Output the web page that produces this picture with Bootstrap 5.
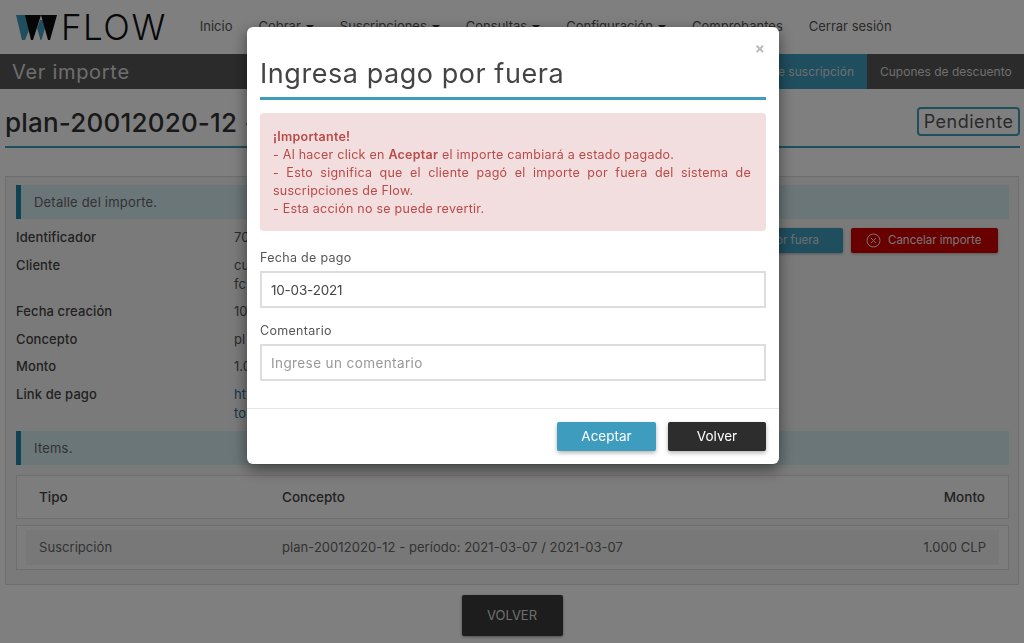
<!DOCTYPE html>
<html lang="es"><head><meta charset="utf-8"><title>Ver importe</title>
<link href="https://cdn.jsdelivr.net/npm/bootstrap@5.3.0/dist/css/bootstrap.min.css" rel="stylesheet">
<style>
html,body{height:643px;overflow:hidden}
body{font-family:Inter,"Open Sans","Liberation Sans",sans-serif;font-size:13px;color:#555;background:#fff}
.topnav{height:54px;padding:0 16px;background:#fff}
.logo-txt{font-size:35px;font-weight:300;color:#111;line-height:1;letter-spacing:1.5px;margin-left:2px}
.navlinks{margin-left:33px;gap:26px}
.navlinks a{color:#555;font-size:13px;text-decoration:none}
.navlinks a.drop::after{content:"";display:inline-block;border:4px solid transparent;border-top-color:#333;border-bottom:0;margin-left:5px;vertical-align:2px}
.subbar{height:35px;background:#575757;color:#ddd}
.subbar h2{font-size:20px;font-weight:400;margin:0 0 0 12px;letter-spacing:.7px}
.subtab{height:35px;display:flex;align-items:center;padding:0 13px;font-size:12px;color:#ddd;white-space:nowrap}
.subtab-on{background:#3e9dbf;padding-left:70px}
.subtab-off{width:157px;background:#575757;padding-right:0}
.pagehead{margin:18px 4px 0 5px;height:41px;border-bottom:2px solid #3e9dbf;padding-bottom:9px}
.pagehead h1{font-size:26px;font-weight:500;color:#333;margin:0;letter-spacing:.2px}
.estado{border:2px solid #3e9dbf;border-radius:4px;font-size:18px;line-height:25px;padding:0;color:#555;width:103px;text-align:center;letter-spacing:.5px}
.panelbox{margin:28px 5px 0;height:409px;border:1px solid #ddd;background:#f5f5f5;padding:8px 9px 0 10px}
.sechead{height:34px;background:#d6ecf2;border-left:5px solid #1f87a8;padding-left:13px;line-height:34px;color:#666;letter-spacing:.2px}
.infoarea{height:212px}
.dlab{width:218px;font-weight:500;color:#444;flex:none;letter-spacing:.1px}
.infocol{padding-top:9px}
.drow{line-height:19px;margin-bottom:8.5px}
.dval{width:300px;color:#555}
.dval a{color:#1f6d9b;text-decoration:none}
.actions{margin-top:9px;gap:8px;margin-right:11px}
.act{height:25px;border-radius:2px;font-size:11.5px;color:#ddd;display:flex;align-items:center;box-shadow:0 1px 3px rgba(0,0,0,.3)}
.act-blue{background:#3e9dbf;width:200px;justify-content:flex-end;padding-right:24px}
.act-red{background:#d00000;width:147px;padding-left:15px;gap:7px;color:#eee}
.tcard{background:#fafafa;border:1px solid #ddd;padding:0 23px 0 22px;margin-top:10px;height:44px}
.tcard-b{margin-top:6px;height:45px;padding:4px 9px;color:#666;letter-spacing:.05px}
.tcard-b>div{background:#f0f0f0;height:35px;padding:0 13px}
.tcol1{width:243px;flex:none}
.tcard-h{font-weight:500;font-size:13.5px;color:#444}
.backbtn{margin-top:10px;height:41px;width:101px;background:#3a3a3a;color:#ddd;font-size:13px;border-radius:2px;box-shadow:0 1px 3px rgba(0,0,0,.4)}
.dlg{width:532px;height:437px;margin:27px 0 0 247px;background:#fff;border-radius:6px;box-shadow:0 5px 15px rgba(0,0,0,.5);padding:0 13px;position:relative}
.dlg .xclose{position:absolute;top:13px;right:14px;font-size:15px;line-height:18px;color:#bbb;font-weight:700}
.dlg h3{margin:0;padding-top:29px;height:73px;border-bottom:3px solid #3e9dbf;font-size:27px;font-weight:400;color:#444;letter-spacing:.55px;line-height:35px}
.warn{margin:13px 0 0;background:#f2dede;color:#b94a48;border-radius:4px;padding:15px 15px 0 13px;height:118px;font-size:12.5px;line-height:18px;text-align:justify;letter-spacing:.25px}
.warn b{font-weight:600}
.fldlab{font-size:12.5px;line-height:18px;color:#555;margin:18px 0 4px;letter-spacing:.3px}
.fld{height:37px;border:2px solid #ddd;border-radius:0;font-size:13.5px;padding:0 9px;color:#444;box-shadow:none}
.fld-date{letter-spacing:-.2px}
.fld::placeholder{color:#999;letter-spacing:.4px}
.fld2{margin-top:14px}
.dfoot{margin:27px -13px 0;border-top:1px solid #e5e5e5;padding:13px 13px 0;gap:12px}
.mbtn{height:29px;width:99px;border:0;border-radius:2px;color:#fff;font-size:13.5px;box-shadow:0 2px 4px rgba(0,0,0,.3);padding:0}
.mbtn-a{background:#3e9dbf}
.mbtn-v{background:#2d2d2d;width:98px}
.modal-backdrop{opacity:.5}
</style></head><body>
<nav class="topnav d-flex align-items-center">
 <svg width="43" height="27" viewBox="0 0 43 27" aria-hidden="true"><polygon points="0,1 10,1 13,16 9,26 6,26" fill="#3e9dbf"/><polygon points="21,14 24,6 27,6 29,14 25.5,26 24.5,26" fill="#3e9dbf"/><polygon points="9,1 25,1 17,26 15,26" fill="#0c0c0c"/><polygon points="25,1 41,1 34,26 32,26" fill="#0c0c0c"/></svg>
 <span class="logo-txt">FLOW</span>
 <div class="navlinks d-flex">
  <a href="#">Inicio</a><a href="#" class="drop">Cobrar</a><a href="#" class="drop">Suscripciones</a><a href="#" class="drop">Consultas</a><a href="#" class="drop">Configuración</a><a href="#">Comprobantes</a><a href="#">Cerrar sesión</a>
 </div>
</nav>
<div class="subbar d-flex align-items-center justify-content-between">
 <h2>Ver importe</h2>
 <div class="d-flex"><div class="subtab subtab-on">e suscripción</div><div class="subtab subtab-off">Cupones de descuento</div></div>
</div>
<div class="pagehead d-flex justify-content-between align-items-start">
 <h1>plan-20012020-12 -</h1><div class="estado">Pendiente</div>
</div>
<section class="panelbox">
 <div class="sechead">Detalle del importe.</div>
 <div class="infoarea d-flex justify-content-between">
  <div class="infocol">
   <div class="d-flex drow"><div class="dlab">Identificador</div><div class="dval">70</div></div>
   <div class="d-flex drow"><div class="dlab">Cliente</div><div class="dval">cu<br>fc</div></div>
   <div class="d-flex drow"><div class="dlab">Fecha creación</div><div class="dval">10</div></div>
   <div class="d-flex drow"><div class="dlab">Concepto</div><div class="dval">pl</div></div>
   <div class="d-flex drow"><div class="dlab">Monto</div><div class="dval">1.0</div></div>
   <div class="d-flex drow"><div class="dlab">Link de pago</div><div class="dval"><a href="#">ht<br>to</a></div></div>
  </div>
  <div class="d-flex actions align-items-start">
   <div class="act act-blue">or fuera</div>
   <div class="act act-red"><svg width="15" height="15" viewBox="0 0 15 15" aria-hidden="true"><circle cx="7.5" cy="7.5" r="6.5" fill="none" stroke="#eee"/><path d="M5 5l5 5M10 5l-5 5" stroke="#eee"/></svg>Cancelar importe</div>
  </div>
 </div>
 <div class="sechead">Items.</div>
 <div class="tcard tcard-h d-flex align-items-center"><div class="tcol1">Tipo</div><div class="flex-grow-1">Concepto</div><div>Monto</div></div>
 <div class="tcard tcard-b"><div class="d-flex align-items-center"><div class="tcol1">Suscripción</div><div class="flex-grow-1">plan-20012020-12 - período: 2021-03-07 / 2021-03-07</div><div>1.000 CLP</div></div></div>
</section>
<div class="d-flex justify-content-center"><button class="backbtn border-0" type="button">VOLVER</button></div>
<div class="modal-backdrop show"></div>
<div class="modal d-block" role="dialog">
 <div class="dlg">
  <span class="xclose">×</span>
  <h3>Ingresa pago por fuera</h3>
  <div class="warn"><b>¡Importante!</b><br>- Al hacer click en <b>Aceptar</b> el importe cambiará a estado pagado.<br>- Esto significa que el cliente pagó el importe por fuera del sistema de suscripciones de Flow.<br>- Esta acción no se puede revertir.</div>
  <div class="fldlab">Fecha de pago</div>
  <input class="form-control fld fld-date" value="10-03-2021">
  <div class="fldlab fld2">Comentario</div>
  <input class="form-control fld" placeholder="Ingrese un comentario">
  <div class="dfoot d-flex justify-content-end"><button class="mbtn mbtn-a" type="button">Aceptar</button><button class="mbtn mbtn-v" type="button">Volver</button></div>
 </div>
</div>
</body></html>
